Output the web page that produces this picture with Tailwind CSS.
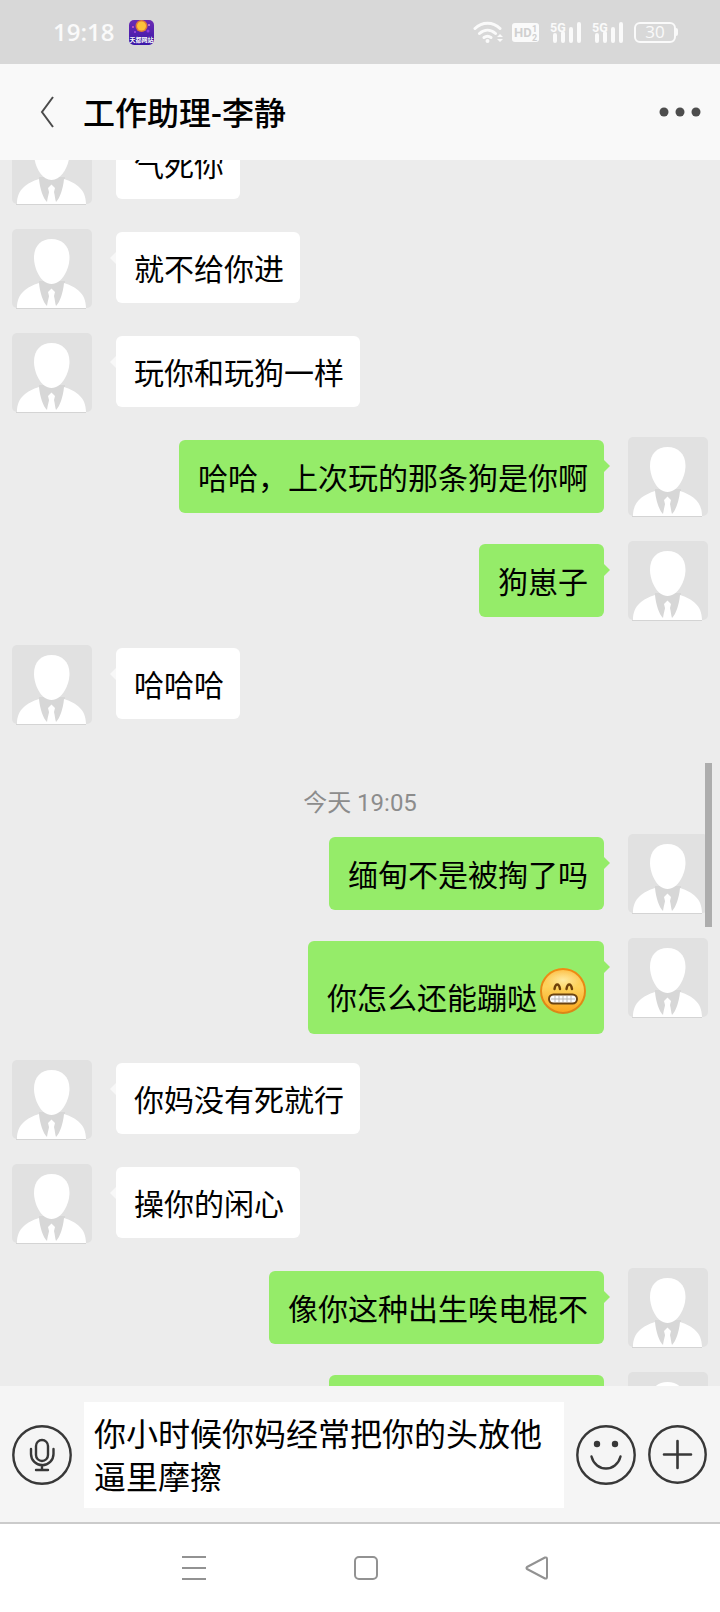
<!DOCTYPE html>
<html lang="zh-CN">
<head>
<meta charset="utf-8">
<meta name="viewport" content="width=device-width, initial-scale=1">
<title>工作助理-李静</title>
<script src="https://cdn.jsdelivr.net/npm/@tailwindcss/browser@4"></script>
</head>
<body class="flex h-screen flex-col overflow-hidden bg-[#ececec] font-['Roboto','Noto_Sans_CJK_SC',sans-serif] text-black">

<svg class="absolute size-0" aria-hidden="true">
  <defs>
    <linearGradient id="face" x1="0" y1="0" x2="0" y2="1">
      <stop offset="0" stop-color="#fdc04a"/><stop offset=".4" stop-color="#fdd35c"/><stop offset="1" stop-color="#fba51c"/>
    </linearGradient>
    <radialGradient id="shine"><stop offset="0" stop-color="#fff3b8"/><stop offset="1" stop-color="#fff3b8" stop-opacity="0"/></radialGradient>
    <linearGradient id="rim" x1="0" y1="0" x2="0" y2="1">
      <stop offset="0" stop-color="#f08a12"/><stop offset="1" stop-color="#d98718"/>
    </linearGradient>
    <linearGradient id="app" x1="0" y1="0" x2="0" y2="1">
      <stop offset="0" stop-color="#6c2bb4"/><stop offset="1" stop-color="#3a17a8"/>
    </linearGradient>
  </defs>
  <symbol id="avatar" viewBox="0 0 80 80">
    <rect width="80" height="79" rx="5" fill="#e1e1e1"/>
    <path d="M27 52h26v27H27z" fill="#d7d7d7"/>
    <path d="M5 79C5 64 15 58 27 54c1 10 4 19 8 23 1-6 2-9 2-10l-1-4 3.500-3.500L43 63l-1 4c1 4 1 7 2 10 4-4 7-13 8-23 12 4 22 10 22 25z" fill="#fff"/>
    <path d="M35 77h9v2h-9z" fill="#fff"/>
    <path d="M39.500 10C50 10 57.500 17 57.500 28.500 57.500 40 50 55 39.500 55S22 40 22 28.500C22 17 29 10 39.500 10z" fill="#fff"/>
    <path d="M4 79.500h70" stroke="#d4d4d4"/>
  </symbol>
  <symbol id="signal" viewBox="0 0 32 24">
    <text x="0" y="12" font-size="12.500" font-weight="700" font-family="Roboto" fill="#fafafa">5G</text>
    <path d="M5 15v6M13 13v8M21 9v12M29 4v17" stroke="#fafafa" stroke-width="4" stroke-linecap="round" fill="none"/>
  </symbol>
</svg>

<div class="flex h-16 shrink-0 items-center justify-between bg-[#d8d8d8] pr-[42px] pl-[53px] text-[#fafafa]">
  <div class="flex items-center gap-[15px]">
    <time class="font-['Open_Sans'] text-2xl leading-8 font-semibold">19:18</time>
    <svg class="size-[25px]" viewBox="0 0 25 25" role="img" aria-label="应用通知">
      <rect width="25" height="25" rx="5" fill="url(#app)"/>
      <circle cx="4" cy="7" r="1" fill="#d45bc0"/><circle cx="20" cy="5" r="1" fill="#e08bd0"/><circle cx="6" cy="12" r="1" fill="#a04be0"/><circle cx="19" cy="11" r="1.500" fill="#8c3be0"/>
      <circle cx="12.500" cy="6" r="6" fill="#e07a3a"/><circle cx="12.500" cy="6" r="4.500" fill="#fcc23a"/>
      <path d="M1 17h23v5H1z" fill="#2c1196"/>
      <text x="12.500" y="22" text-anchor="middle" font-size="6" font-weight="700" fill="#fff" font-family="Noto Sans CJK SC">天都网站</text>
    </svg>
  </div>
  <div class="flex items-center">
    <svg class="h-6 w-[30px]" viewBox="0 0 30 24" fill="none" stroke="#fafafa" stroke-width="3" role="img" aria-label="Wi-Fi">
      <path d="M2 8.500c7-7 18-7 25 0M6.500 13.500c5-4.500 11-4.500 16 0" stroke-linecap="round"/>
      <path d="M11 17.500c2-1.500 5-1.500 7 0" stroke-linecap="round"/>
      <circle cx="14.500" cy="21" r="2" fill="#fafafa" stroke="none"/>
      <path d="M24 17l3-3 3 3zM24 19l3 3 3-3z" fill="#fafafa" stroke="none"/>
    </svg>
    <svg class="ml-[9px] h-6 w-[27px]" viewBox="0 0 27 24" role="img" aria-label="HD">
      <rect y="3" width="27" height="19" rx="3" fill="#fafafa"/>
      <text x="2" y="17" font-size="13" font-weight="700" font-family="Roboto" fill="#d0d0d0">HD</text>
      <text x="20" y="12" font-size="9" font-weight="700" font-family="Roboto" fill="#d0d0d0">1</text>
      <text x="20" y="21" font-size="9" font-weight="700" font-family="Roboto" fill="#d0d0d0">2</text>
    </svg>
    <svg class="ml-[11px] h-6 w-8" role="img" aria-label="5G"><use href="#signal"/></svg>
    <svg class="ml-[10px] h-6 w-8" role="img" aria-label="5G"><use href="#signal"/></svg>
    <div class="ml-[10px] flex h-[21px] w-[42px] items-center justify-center rounded-md border-2 border-[#fafafa] font-['Open_Sans'] text-[17px] leading-4 font-medium">30</div>
    <div class="h-2 w-[2px] rounded-r bg-[#fafafa]"></div>
  </div>
</div>

<header class="flex h-24 shrink-0 items-center bg-[#f9f9f9] pr-[18px] pl-9">
  <button type="button" aria-label="返回" class="flex w-[47px]">
    <svg class="h-8 w-6" viewBox="0 0 24 32" fill="none" stroke="#4b4b4b" stroke-width="2"><path d="M17 1L6 16l11 15"/></svg>
  </button>
  <h1 class="flex-1 pt-[3px] text-[32px] leading-10 font-medium">工作助理-李静</h1>
  <button type="button" aria-label="更多">
    <svg class="h-4 w-11" viewBox="0 0 44 16" fill="#4d4d4d"><circle cx="6" cy="8" r="4.500"/><circle cx="22" cy="8" r="4.500"/><circle cx="38" cy="8" r="4.500"/></svg>
  </button>
</header>

<main class="relative min-h-0 flex-1 overflow-hidden px-3 text-[30px] leading-9 font-normal">
  <div class="-mt-[35px] flex flex-col gap-6">
    <div class="flex items-start gap-6">
      <svg class="size-20 shrink-0"><use href="#avatar"/></svg>
      <p class="mt-[3px] rounded-md bg-white pt-5 pr-4 pb-[15px] pl-[18px]">气死你</p>
    </div>
    <div class="flex items-start gap-6">
      <svg class="size-20 shrink-0"><use href="#avatar"/></svg>
      <p class="relative mt-[3px] rounded-md bg-white pt-5 pr-4 pb-[15px] pl-[18px] before:absolute before:top-5 before:-left-[6px] before:border-y-[6px] before:border-r-[6px] before:border-y-transparent before:border-r-[#f8f8f8]">就不给你进</p>
    </div>
    <div class="flex items-start gap-6">
      <svg class="size-20 shrink-0"><use href="#avatar"/></svg>
      <p class="relative mt-[3px] rounded-md bg-white pt-5 pr-4 pb-[15px] pl-[18px] before:absolute before:top-5 before:-left-[6px] before:border-y-[6px] before:border-r-[6px] before:border-y-transparent before:border-r-[#f8f8f8]">玩你和玩狗一样</p>
    </div>
    <div class="flex items-start justify-end gap-6">
      <p class="relative mt-[3px] rounded-md bg-[#95ec69] pt-[21px] pr-4 pb-4 pl-[19px] before:absolute before:top-5 before:-right-[6px] before:border-y-[6px] before:border-l-[6px] before:border-y-transparent before:border-l-[#95ec69]">哈哈，上次玩的那条狗是你啊</p>
      <svg class="size-20 shrink-0"><use href="#avatar"/></svg>
    </div>
    <div class="flex items-start justify-end gap-6">
      <p class="relative mt-[3px] rounded-md bg-[#95ec69] pt-[21px] pr-4 pb-4 pl-[19px] before:absolute before:top-5 before:-right-[6px] before:border-y-[6px] before:border-l-[6px] before:border-y-transparent before:border-l-[#95ec69]">狗崽子</p>
      <svg class="size-20 shrink-0"><use href="#avatar"/></svg>
    </div>
    <div class="flex items-start gap-6">
      <svg class="size-20 shrink-0"><use href="#avatar"/></svg>
      <p class="relative mt-[3px] rounded-md bg-white pt-5 pr-4 pb-[15px] pl-[18px] before:absolute before:top-5 before:-left-[6px] before:border-y-[6px] before:border-r-[6px] before:border-y-transparent before:border-r-[#f8f8f8]">哈哈哈</p>
    </div>
    <time class="-mb-[9px] pt-[38px] text-center text-2xl leading-8 text-[#8c8c8c]">今天 19:05</time>
    <div class="flex items-start justify-end gap-6">
      <p class="relative mt-[3px] rounded-md bg-[#95ec69] pt-[21px] pr-4 pb-4 pl-[19px] before:absolute before:top-5 before:-right-[6px] before:border-y-[6px] before:border-l-[6px] before:border-y-transparent before:border-l-[#95ec69]">缅甸不是被掏了吗</p>
      <svg class="size-20 shrink-0"><use href="#avatar"/></svg>
    </div>
    <div class="flex items-start justify-end gap-6 pb-[2px]">
      <p class="relative mt-[3px] flex items-end rounded-md bg-[#95ec69] pt-[27px] pr-[18px] pb-[17px] pl-[19px] before:absolute before:top-5 before:-right-[6px] before:border-y-[6px] before:border-l-[6px] before:border-y-transparent before:border-l-[#95ec69]">你怎么还能蹦哒
        <svg class="mb-[3px] ml-[3px] size-[46px]" viewBox="1 1 46 46" role="img" aria-label="😁">
          <circle cx="24" cy="24" r="22" fill="url(#face)" stroke="url(#rim)" stroke-width="2"/>
          <ellipse cx="24" cy="13" rx="18" ry="10" fill="url(#shine)" opacity=".75"/>
          <path d="M15.500 22c1-6 4.500-6 5.500 0M27.500 22c1-6 4.500-6 5.500 0" fill="none" stroke="#6f4108" stroke-width="2.400" stroke-linecap="round"/>
          <rect x="10" y="27.500" width="28" height="9" rx="4.500" fill="#fdfdfd" stroke="#6b4310" stroke-width="2"/>
          <path d="M12 32h24M16 29v6M20 29v6M24 29v6M28 29v6M32 29v6" stroke="#b9b9b9" stroke-width="1"/>
        </svg></p>
      <svg class="size-20 shrink-0"><use href="#avatar"/></svg>
    </div>
    <div class="flex items-start gap-6">
      <svg class="size-20 shrink-0"><use href="#avatar"/></svg>
      <p class="relative mt-[3px] rounded-md bg-white pt-5 pr-4 pb-[15px] pl-[18px] before:absolute before:top-5 before:-left-[6px] before:border-y-[6px] before:border-r-[6px] before:border-y-transparent before:border-r-[#f8f8f8]">你妈没有死就行</p>
    </div>
    <div class="flex items-start gap-6">
      <svg class="size-20 shrink-0"><use href="#avatar"/></svg>
      <p class="relative mt-[3px] rounded-md bg-white pt-5 pr-4 pb-[15px] pl-[18px] before:absolute before:top-5 before:-left-[6px] before:border-y-[6px] before:border-r-[6px] before:border-y-transparent before:border-r-[#f8f8f8]">操你的闲心</p>
    </div>
    <div class="flex items-start justify-end gap-6">
      <p class="relative mt-[3px] rounded-md bg-[#95ec69] pt-[21px] pr-4 pb-4 pl-[19px] before:absolute before:top-5 before:-right-[6px] before:border-y-[6px] before:border-l-[6px] before:border-y-transparent before:border-l-[#95ec69]">像你这种出生唉电棍不</p>
      <svg class="size-20 shrink-0"><use href="#avatar"/></svg>
    </div>
    <div class="flex items-start justify-end gap-6">
      <p class="mt-[3px] h-[73px] w-[275px] rounded-md bg-[#95ec69]"></p>
      <svg class="size-20 shrink-0"><use href="#avatar"/></svg>
    </div>
  </div>
  <div class="absolute top-[603px] right-2 h-[164px] w-[7px] bg-[#adadad]"></div>
</main>

<form class="flex shrink-0 items-center gap-3 border-b-2 border-[#cbcbcb] bg-[#f5f5f5] px-3 pt-4 pb-[14px]">
  <button type="button" aria-label="语音输入">
    <svg class="size-[60px]" viewBox="0 0 60 60" fill="none" stroke="#383838" stroke-width="2.400" stroke-linecap="round">
      <circle cx="30" cy="30" r="28.700"/>
      <rect x="24" y="15" width="12" height="21" rx="6"/>
      <path d="M19 24v5a11 11 0 0 0 22.500 0v-5M30 40v5M24 45h12"/>
    </svg>
  </button>
  <textarea aria-label="消息" rows="2" class="block h-[106px] min-w-0 flex-1 resize-none overflow-hidden bg-white pt-3 pb-2 pl-[10px] text-[32px] leading-[43px] outline-none">你小时候你妈经常把你的头放他逼里摩擦</textarea>
  <button type="button" aria-label="表情">
    <svg class="size-[60px]" viewBox="0 0 60 60" fill="none" stroke="#383838" stroke-width="2.400" stroke-linecap="round">
      <circle cx="30" cy="30" r="28.700"/>
      <circle cx="21" cy="19" r="3.200" fill="#383838" stroke="none"/><circle cx="39" cy="19" r="3.200" fill="#383838" stroke="none"/>
      <path d="M15.500 31.500c4 16 25 16 29 0"/>
    </svg>
  </button>
  <button type="button" aria-label="更多功能">
    <svg class="size-[60px]" viewBox="0 0 60 60" fill="none" stroke="#383838" stroke-width="2.400" stroke-linecap="round">
      <circle cx="29.500" cy="29.500" r="28.200"/>
      <path d="M29.500 16v27M16 29.500h27" stroke-width="2.600"/>
    </svg>
  </button>
</form>

<nav aria-label="系统导航" class="flex h-[88px] shrink-0 items-center justify-center gap-[144px] bg-white pl-3 text-[#929292]">
  <button type="button" aria-label="最近任务"><svg class="size-7" viewBox="0 0 28 28" fill="none" stroke="currentColor" stroke-width="2"><path d="M2 3h24M2 14h24M2 25h24"/></svg></button>
  <button type="button" aria-label="主屏幕"><svg class="size-7" viewBox="0 0 28 28" fill="none" stroke="currentColor" stroke-width="2"><rect x="3" y="3" width="22" height="22" rx="4"/></svg></button>
  <button type="button" aria-label="返回上一页"><svg class="size-7" viewBox="0 0 28 28" fill="none" stroke="currentColor" stroke-width="2" stroke-linejoin="round"><path d="M3 13q-1 1 0 2l18 9.500q2 .5 2-1.500V5q0-2-2-1.500z"/></svg></button>
</nav>
</body>
</html>
